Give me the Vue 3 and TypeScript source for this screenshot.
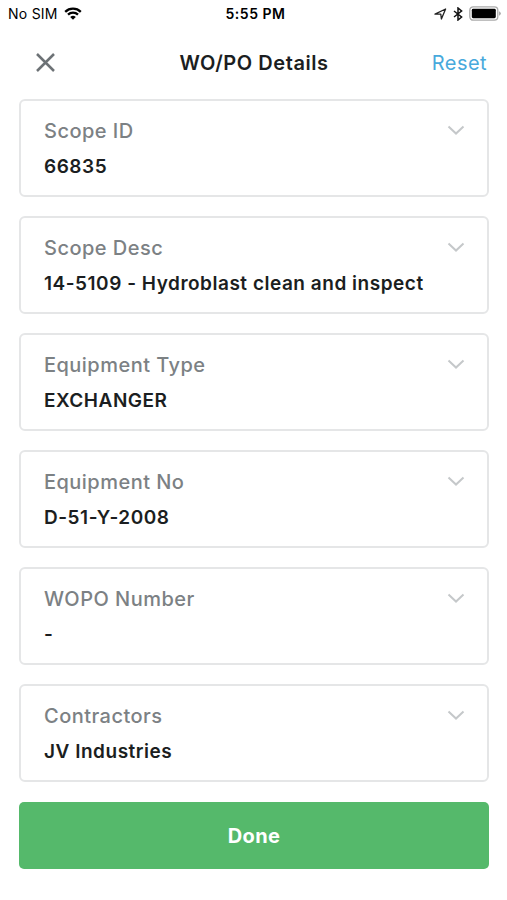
<script setup lang="ts">
interface Field {
  label: string
  value: string
}

const fields: Field[] = [
  { label: 'Scope ID', value: '66835' },
  { label: 'Scope Desc', value: '14-5109 - Hydroblast clean and inspect' },
  { label: 'Equipment Type', value: 'EXCHANGER' },
  { label: 'Equipment No', value: 'D-51-Y-2008' },
  { label: 'WOPO Number', value: '-' },
  { label: 'Contractors', value: 'JV Industries' },
]
</script>

<template>
  <main class="screen">
    <div class="status">
      <div class="carrier">
        <span>No SIM</span>
        <svg class="wifi" width="18" height="14" viewBox="0 0 18 14">
          <path d="M1.2 4.8a11.2 11.2 0 0 1 15.6 0M4 7.6a7.2 7.2 0 0 1 10 0" fill="none" stroke="#000" stroke-width="2.3" />
          <path d="M9 12.8 6.2 10a4.2 4.2 0 0 1 5.6 0z" />
        </svg>
      </div>
      <span class="time">5:55 PM</span>
      <div class="indicators">
        <svg width="13" height="12" viewBox="0 0 13 12">
          <path d="M1 6.2 11.6 1 7.4 11l-.6-4.8z" fill="none" stroke="#222" stroke-width="1.3" stroke-linejoin="round" />
        </svg>
        <svg class="bluetooth" width="10" height="14" viewBox="0 0 10 14">
          <path d="M1 4l7.6 6L5 13V1l3.6 3L1 10" fill="none" stroke="#111" stroke-width="1.5" />
        </svg>
        <svg class="battery" width="32" height="15" viewBox="0 0 32 15">
          <rect x=".8" y=".8" width="28" height="13.4" rx="3.4" fill="#fff" stroke="#aaa" stroke-width="1.3" />
          <rect x="2.8" y="2.8" width="24" height="9.4" rx="1.4" />
          <path d="M30.2 5.3q1.5.8 1.5 2.2t-1.5 2.2z" fill="#999" />
        </svg>
      </div>
    </div>

    <header class="header">
      <button class="close" aria-label="Close">
        <svg width="20" height="20" viewBox="0 0 20 20">
          <path d="M2 1l17 17M19 1l-17 17" fill="none" stroke="#6d7276" stroke-width="2.5" />
        </svg>
      </button>
      <h1 class="title">WO/PO Details</h1>
      <button class="reset">Reset</button>
    </header>

    <section class="fields">
      <div v-for="field in fields" :key="field.label" class="field">
        <div class="field-top">
          <span class="label">{{ field.label }}</span>
          <svg width="18" height="11" viewBox="0 0 18 11">
            <path d="M1.5 1.5 9 8.6l7.5-7.1" fill="none" stroke="#c5c8ca" stroke-width="2" />
          </svg>
        </div>
        <div class="value">{{ field.value }}</div>
      </div>
    </section>

    <button class="done">Done</button>
  </main>
</template>

<style>
body {
  background: #fff;
}
</style>

<style scoped>
.screen {
  box-sizing: border-box;
  width: 507px;
  height: 900px;
  font-family: Inter, sans-serif;
  color: #1b1e21;
  background: #fff;
}
button {
  padding: 0;
  border: 0;
  background: none;
  font: inherit;
}
svg {
  display: block;
}
.status {
  display: grid;
  grid-template-columns: 1fr auto 1fr;
  align-items: center;
  height: 27px;
  padding: 0 6px 0 8px;
  color: #000;
  font-size: 14px;
}
.carrier,
.indicators {
  display: flex;
  align-items: center;
}
.carrier {
  gap: 6px;
  letter-spacing: 0.25px;
}
.time {
  padding-left: 2px;
  font-size: 14px;
  font-weight: 600;
  letter-spacing: 0.5px;
}
.indicators {
  justify-content: flex-end;
  gap: 6px;
}
.header {
  display: grid;
  grid-template-columns: 110px 1fr 110px;
  align-items: center;
  height: 72px;
  padding: 0 20px 1px;
  box-sizing: border-box;
}
.close {
  width: 20px;
  margin-left: 15px;
}
.title {
  margin: 0;
  padding-left: 1px;
  font-size: 20px;
  font-weight: 600;
  letter-spacing: 0.55px;
  text-align: center;
}
.reset {
  justify-self: end;
  color: #48a9dc;
  font-size: 20px;
  letter-spacing: 0.45px;
}
.fields {
  display: grid;
  gap: 19px;
  padding: 0 18px 0 19px;
}
.field {
  box-sizing: border-box;
  height: 98px;
  padding: 17px 22px 0 23px;
  border: 2px solid #e5e6e7;
  border-radius: 6px;
}
.field-top {
  display: flex;
  align-items: center;
  justify-content: space-between;
  height: 26px;
}
.field-top svg {
  margin-bottom: 2px;
}
.label {
  color: #7c8184;
  font-size: 20px;
  font-weight: 450;
  letter-spacing: 0.47px;
}
.value {
  margin-top: 10px;
  font-size: 19px;
  font-weight: 600;
  letter-spacing: 0.52px;
  line-height: 26px;
}
.done {
  display: block;
  width: 470px;
  height: 67px;
  margin: 20px 0 0 19px;
  padding-top: 1px;
  border-radius: 5px;
  background: #55b96b;
  color: #fff;
  font-size: 20px;
  font-weight: 700;
  letter-spacing: 0.3px;
}
</style>
